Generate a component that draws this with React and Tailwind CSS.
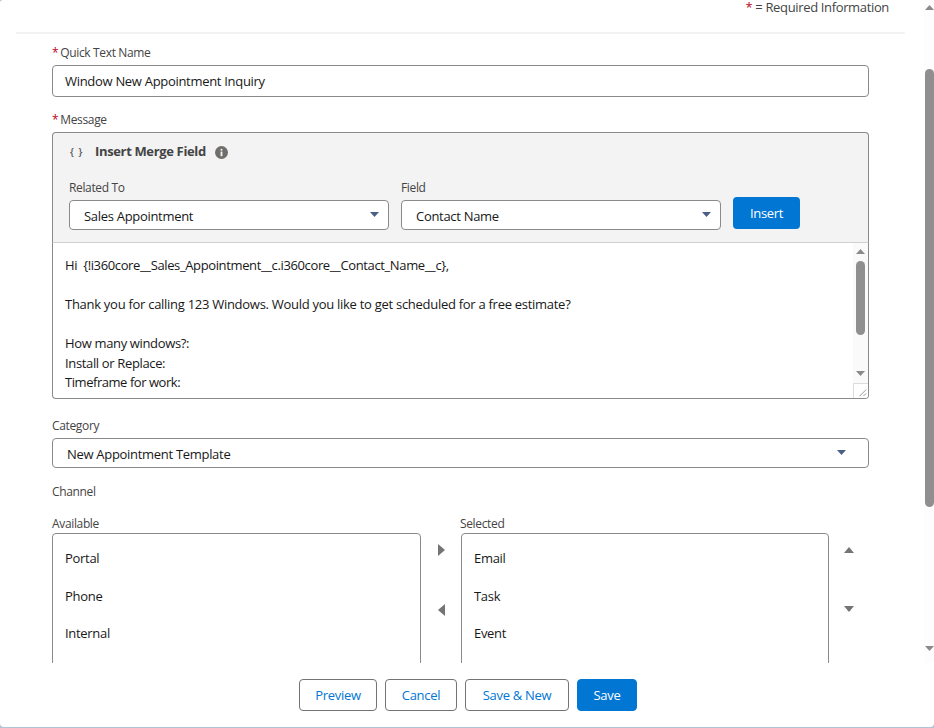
import React from 'react';

const font = { fontFamily: '"Open Sans", sans-serif' };

function Caret({ className = '', dir = 'down' }) {
  const points = {
    down: '0,0 12,0 6,7',
    up: '0,7 12,7 6,0',
    left: '7,0 7,12 0,6',
    right: '0,0 0,12 7,6',
  }[dir];
  const box = dir === 'left' || dir === 'right' ? '0 0 7 12' : '0 0 12 7';
  return (
    <svg viewBox={box} className={className} fill="currentColor" preserveAspectRatio="none">
      <polygon points={points} />
    </svg>
  );
}

function Label({ required, children, className = '' }) {
  return (
    <div className={`text-[12px] leading-[18px] tracking-[-0.35px] text-[#444] ${className}`}>
      {required && <span className="text-[#ba0517] mr-[2px]">*</span>}
      {children}
    </div>
  );
}

function Select({ value, className = '', caret = 'mr-[9px]' }) {
  return (
    <div className={`flex items-center justify-between bg-white border border-[#8a8a8a] rounded-[4px] pl-[14px] ${className}`}>
      <span className="pt-[3px] text-[13px] tracking-[-0.3px] text-[#181818]">{value}</span>
      <Caret className={`w-[9px] h-[5px] mb-[1px] text-[#4a5f86] ${caret}`} />
    </div>
  );
}

function ListBox({ items, className = '' }) {
  return (
    <div className={`h-[140px] border border-[#8a8a8a] rounded-t-[4px] bg-white pl-[12px] pt-[15px] flex flex-col gap-[18.5px] ${className}`}>
      {items.map((item) => (
        <div key={item} className="text-[13px] leading-[19px] tracking-[-0.3px] text-[#181818]">{item}</div>
      ))}
    </div>
  );
}

function FooterButton({ children, brand, className = '' }) {
  return (
    <button
      className={`h-[32px] pt-[1px] rounded-[4px] border text-[13px] tracking-[-0.3px] ${
        brand ? 'bg-[#0176d3] border-[#0176d3] text-white' : 'bg-white border-[#747474] text-[#0176d3]'
      } ${className}`}
    >
      {children}
    </button>
  );
}

export default function App() {
  return (
    <div style={font} className="w-[934px] h-[728px] overflow-hidden bg-[#b0c4d8]">
      <div className="h-[727px] bg-white flex flex-col rounded-tl-[3px] rounded-b-[4px] overflow-hidden">
        <div className="h-[663px] flex overflow-hidden shrink-0">
          {/* form */}
          <div className="w-[924px] overflow-hidden pl-[16px]">
            <div className="w-[889px] h-[34px] border-b-2 border-[#f3f3f3] text-right pr-[16px] text-[13px] leading-[15px] tracking-[-0.35px] text-[#444]">
              <span className="text-[#ba0517]">*</span> = Required Information
            </div>

            <div className="pl-[36px] w-[853px]">
              <Label required className="mt-[10px]">Quick Text Name</Label>
              <div className="mt-[3px] h-[32px] border border-[#8a8a8a] rounded-[4px] pl-[12px] pt-[1px] flex items-center text-[13px] tracking-[-0.3px] text-[#181818]">
                Window New Appointment Inquiry
              </div>

              <Label required className="mt-[14px]">Message</Label>
              <div className="mt-[3px] h-[110px] bg-[#f3f3f3] border border-[#8a8a8a] border-b-0 rounded-t-[4px] pl-[16px]">
                <div className="flex items-center h-[38px]">
                  <span className="w-[26px] pl-[1px] text-[10px] font-semibold tracking-[1px] text-[#555]">{'{ }'}</span>
                  <span className="text-[13px] font-bold tracking-[-0.35px] text-[#444]">Insert Merge Field</span>
                  <svg viewBox="0 0 14 14" className="w-[13px] h-[13px] ml-[9px] text-[#706e6b]" fill="currentColor">
                    <circle cx="7" cy="7" r="7" />
                    <rect x="6" y="6" width="2" height="5" fill="#f3f3f3" />
                    <circle cx="7" cy="4" r="1.1" fill="#f3f3f3" />
                  </svg>
                </div>
                <div className="flex mt-[8px]">
                  <div className="w-[320px]">
                    <Label>Related To</Label>
                    <Select value="Sales Appointment" className="mt-[3px] h-[30px]" />
                  </div>
                  <div className="w-[320px] ml-[12px]">
                    <Label>Field</Label>
                    <Select value="Contact Name" className="mt-[3px] h-[30px]" />
                  </div>
                  <button className="ml-[12px] mt-[18px] w-[67px] h-[32px] pt-[1px] rounded-[4px] bg-[#0176d3] text-white text-[13px] tracking-[-0.3px]">
                    Insert
                  </button>
                </div>
              </div>

              {/* message textarea */}
              <div className="relative h-[157px] border border-[#8a8a8a] border-t-[#d0d0d0] rounded-b-[4px] flex overflow-hidden">
                <div className="flex-1 pl-[12px] pt-[13px] text-[13px] leading-[19.5px] tracking-[-0.3px] text-[#181818]">
                  <div className="tracking-[-0.37px]">Hi&nbsp; {'{!i360core__Sales_Appointment__c.i360core__Contact_Name__c},'}</div>
                  <div className="h-[19.5px]" />
                  <div className="tracking-[-0.28px]">Thank you for calling 123 Windows. Would you like to get scheduled for a free estimate?</div>
                  <div className="h-[19.5px]" />
                  <div className="tracking-[-0.35px]">How many windows?:</div>
                  <div className="tracking-[-0.35px]">Install or Replace:</div>
                  <div className="tracking-[-0.45px]">Timeframe for work:</div>
                </div>
                <div className="w-[15px] bg-[#fafafa] flex flex-col items-center pt-[6px]">
                  <Caret dir="up" className="w-[9px] h-[5px] text-[#8a8a8a]" />
                  <div className="w-[9px] h-[74px] mt-[7px] rounded-full bg-[#8f8f8f]" />
                  <Caret className="w-[9px] h-[5px] mt-[36px] text-[#8a8a8a]" />
                </div>
                <div className="absolute right-0 bottom-0 w-[15px] h-[15px] border-l border-t border-[#dcdcdc] bg-white">
                  <svg viewBox="0 0 15 15" className="w-[14px] h-[14px]" stroke="#777" strokeWidth="0.8">
                    <line x1="6" y1="13" x2="13" y2="6" />
                    <line x1="10" y1="13" x2="13" y2="10" />
                  </svg>
                </div>
              </div>

              <Label className="mt-[18px]">Category</Label>
              <Select value="New Appointment Template" caret="mr-[22px]" className="mt-[3px] h-[30px]" />

              <Label className="mt-[15px]">Channel</Label>

              <div className="flex mt-[14px]">
                <div className="w-[369px]">
                  <Label>Available</Label>
                  <ListBox items={['Portal', 'Phone', 'Internal']} />
                </div>
                <div className="w-[40px] flex flex-col items-center pt-[29px] text-[#747474]">
                  <Caret dir="right" className="w-[7px] h-[12px]" />
                  <Caret dir="left" className="w-[7px] h-[12px] mt-[48px]" />
                </div>
                <div className="w-[368px]">
                  <Label className="-ml-[1px]">Selected</Label>
                  <ListBox items={['Email', 'Task', 'Event']} />
                </div>
                <div className="w-[40px] flex flex-col items-center pt-[32px] text-[#747474]">
                  <Caret dir="up" className="w-[10px] h-[6px]" />
                  <Caret className="w-[10px] h-[6px] mt-[53px]" />
                </div>
              </div>
            </div>
          </div>

          {/* page scrollbar */}
          <div className="w-[10px] bg-[#fdfdfd] flex flex-col items-center pt-[5px]">
            <Caret dir="up" className="w-[9px] h-[5px] text-[#8a8a8a]" />
            <div className="w-[9px] h-[438px] mt-[59px] rounded-full bg-[#8f8f8f]" />
            <Caret className="w-[9px] h-[5px] mt-[139px] text-[#8a8a8a]" />
          </div>
        </div>

        {/* footer */}
        <div className="flex-1 flex justify-start gap-[8px] pl-[299px] pt-[16px]">
          <FooterButton className="w-[78px]">Preview</FooterButton>
          <FooterButton className="w-[72px]">Cancel</FooterButton>
          <FooterButton className="w-[104px]">Save &amp; New</FooterButton>
          <FooterButton brand className="w-[60px]">Save</FooterButton>
        </div>
      </div>
    </div>
  );
}
